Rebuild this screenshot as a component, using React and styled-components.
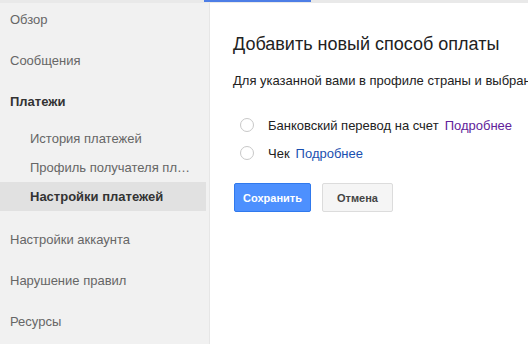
import styled, { createGlobalStyle } from "styled-components";

const GlobalStyle = createGlobalStyle`
html, body {
  margin: 0;
  padding: 0;
  background: #fff;
}
body {
  font-family: "Liberation Sans", Arial, sans-serif;
  overflow: hidden;
}
`

const Page = styled.div`
width: 528px;
height: 344px;
display: flex;
flex-direction: column;
overflow: hidden;
`
const TabStrip = styled.div`
height: 3px;
flex-shrink: 0;
display: flex;
background: #e9e9e9;
`
const ActiveTab = styled.div`
margin-left: 204px;
width: 107px;
height: 2px;
background: #4d7ee6;
`
const Body = styled.div`
flex: 1;
display: flex;
min-height: 0;
`
const Sidebar = styled.nav`
width: 210px;
flex-shrink: 0;
box-sizing: border-box;
background: #f1f1f1;
border-right: 1px solid #e6e6e6;
`
const NavList = styled.ul`
list-style: none;
margin: ${props => props.first ? "-4px" : "0"} 0 0;
padding: 0;
`
const NavItem = styled.li`
height: 41px;
line-height: 41px;
padding-left: 10px;
font-size: 13px;
color: ${props => props.bold ? "#333" : "#666"};
font-weight: ${props => props.bold ? "bold" : "normal"};
`
const SubList = styled.ul`
list-style: none;
margin: 2px 0 8px;
padding: 0;
`
const SubItem = styled.li`
height: 29px;
line-height: 29px;
padding-left: 30px;
padding-right: 10px;
margin-right: 3px;
font-size: 13px;
white-space: nowrap;
overflow: hidden;
text-overflow: ellipsis;
color: ${props => props.active ? "#333" : "#666"};
font-weight: ${props => props.active ? "bold" : "normal"};
background: ${props => props.active ? "#e1e1e1" : "transparent"};
`
const Main = styled.main`
flex: 1;
min-width: 0;
overflow: hidden;
padding-left: 23px;
`
const Title = styled.h2`
margin: 29px 0 0;
font-size: 18px;
line-height: 24px;
font-weight: normal;
color: #222;
white-space: nowrap;
`
const Intro = styled.p`
margin: 16px 0 0;
font-size: 13px;
line-height: 18px;
color: #222;
white-space: nowrap;
`
const Options = styled.div`
margin-top: 21px;
display: flex;
flex-direction: column;
`
const OptionRow = styled.label`
height: 28px;
display: flex;
align-items: center;
font-size: 13px;
color: #222;
white-space: nowrap;
`
const Radio = styled.span`
width: 14px;
height: 14px;
box-sizing: border-box;
border-radius: 50%;
border: 1px solid #c8c8c8;
background: #fff;
margin-left: 7px;
margin-right: 14px;
flex-shrink: 0;
`
const More = styled.a`
margin-left: 6px;
text-decoration: none;
color: ${props => props.visited ? "#61229a" : "#1a4fb0"};
`
const Actions = styled.div`
margin-top: 16px;
margin-left: 1px;
display: flex;
gap: 11px;
`
const Button = styled.button`
height: 29px;
box-sizing: border-box;
padding: 0;
width: ${props => props.primary ? "77px" : "71px"};
border-radius: 2px;
font-family: "Liberation Sans", Arial, sans-serif;
font-size: 11px;
font-weight: bold;
border: 1px solid ${props => props.primary ? "#3079ed" : "#dcdcdc"};
background: ${props => props.primary ? "#4d90fe" : "#f5f5f5"};
color: ${props => props.primary ? "#fff" : "#444"};
`

const App = () => {
    return (
        <Page>
            <GlobalStyle />
            <TabStrip>
                <ActiveTab />
            </TabStrip>
            <Body>
                <Sidebar>
                    <NavList first>
                        <NavItem>Обзор</NavItem>
                        <NavItem>Сообщения</NavItem>
                        <NavItem bold>Платежи</NavItem>
                    </NavList>
                    <SubList>
                        <SubItem>История платежей</SubItem>
                        <SubItem>Профиль получателя платежей</SubItem>
                        <SubItem active>Настройки платежей</SubItem>
                    </SubList>
                    <NavList>
                        <NavItem>Настройки аккаунта</NavItem>
                        <NavItem>Нарушение правил</NavItem>
                        <NavItem>Ресурсы</NavItem>
                    </NavList>
                </Sidebar>
                <Main>
                    <Title>Добавить новый способ оплаты</Title>
                    <Intro>Для указанной вами в профиле страны и выбранной валюты доступны следующие способы оплаты.</Intro>
                    <Options>
                        <OptionRow>
                            <Radio />
                            Банковский перевод на счет
                            <More visited href="#">Подробнее</More>
                        </OptionRow>
                        <OptionRow>
                            <Radio />
                            Чек
                            <More href="#">Подробнее</More>
                        </OptionRow>
                    </Options>
                    <Actions>
                        <Button primary>Сохранить</Button>
                        <Button>Отмена</Button>
                    </Actions>
                </Main>
            </Body>
        </Page>
    );
};

export default App;
